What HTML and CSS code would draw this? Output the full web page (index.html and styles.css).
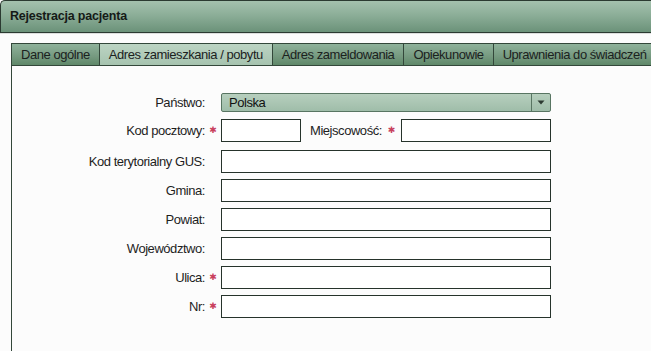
FILE: index.html
```html
<!DOCTYPE html>
<html lang="pl">
<head>
<meta charset="utf-8">
<title>Rejestracja pacjenta</title>
<link rel="stylesheet" href="styles.css">
</head>
<body>
<div class="window">
  <div class="titlebar">Rejestracja pacjenta</div>
  <div class="body">
    <div class="tabs">
      <div class="tab">Dane ogólne</div>
      <div class="tab active">Adres zamieszkania / pobytu</div>
      <div class="tab">Adres zameldowania</div>
      <div class="tab">Opiekunowie</div>
      <div class="tab">Uprawnienia do świadczeń</div>
    </div>
    <div class="panel">
      <div class="row row-select">
        <label class="lbl">Państwo:</label>
        <span class="star"></span>
        <div class="select">
          <span class="select-text">Polska</span>
          <span class="select-btn"><svg width="8" height="5" viewBox="0 0 8 5"><path d="M0.5 0.5 L7.5 0.5 L4 4.5 Z" fill="#2c3a31"/></svg></span>
        </div>
      </div>
      <div class="row row-postal">
        <label class="lbl">Kod pocztowy:</label>
        <span class="star">✱</span>
        <input class="field short" type="text">
        <label class="lbl-inline">Miejscowość:</label>
        <span class="star grow">✱</span>
        <input class="field mid" type="text">
      </div>
      <div class="row">
        <label class="lbl">Kod terytorialny GUS:</label>
        <span class="star"></span>
        <input class="field" type="text">
      </div>
      <div class="row">
        <label class="lbl">Gmina:</label>
        <span class="star"></span>
        <input class="field" type="text">
      </div>
      <div class="row">
        <label class="lbl">Powiat:</label>
        <span class="star"></span>
        <input class="field" type="text">
      </div>
      <div class="row">
        <label class="lbl">Województwo:</label>
        <span class="star"></span>
        <input class="field" type="text">
      </div>
      <div class="row">
        <label class="lbl">Ulica:</label>
        <span class="star">✱</span>
        <input class="field" type="text">
      </div>
      <div class="row">
        <label class="lbl">Nr:</label>
        <span class="star">✱</span>
        <input class="field" type="text">
      </div>
    </div>
  </div>
</div>
</body>
</html>
```
FILE: styles.css
```css
html, body {
  margin: 0;
  padding: 0;
  height: 100%;
}
body {
  background: #fbfbfb;
  font-family: "Liberation Sans", Arial, sans-serif;
  font-size: 13px;
  letter-spacing: -0.45px;
  color: #1e1e1e;
  overflow: hidden;
}
.window {
  display: flex;
  flex-direction: column;
  height: 100%;
}
.titlebar {
  height: 31px;
  line-height: 31px;
  padding-left: 9px;
  font-weight: bold;
  font-size: 12.5px;
  letter-spacing: -0.2px;
  color: #151a17;
  background: linear-gradient(#a4c1ae, #8cae98 45%, #6b9279);
  border-top: 1px solid #2b3a31;
  border-left: 1px solid #2b3a31;
  border-bottom: 1px solid #2b3a31;
  border-top-left-radius: 5px;
}
.body {
  flex: 1;
  display: flex;
  flex-direction: column;
  border-top: 1px solid #dcdfdd;
  padding: 9px 0 0 11px;
  background: #fcfcfc;
}
.tabs {
  display: flex;
  height: 23px;
}
.tab {
  box-sizing: border-box;
  height: 23px;
  line-height: 21px;
  padding: 0 9px;
  white-space: nowrap;
  color: #1b221e;
  background: linear-gradient(#8fb29b, #75997f 60%, #5f8869);
  border: 1px solid #33473a;
  border-left: none;
}
.tab:first-child {
  border-left: 1px solid #33473a;
}
.tab.active {
  background: linear-gradient(#bcd4c3, #a6c3af);
}
.panel {
  flex: 1;
  border-left: 1px solid #33473a;
  padding-top: 27px;
}
.row {
  display: flex;
  align-items: center;
  height: 23px;
  margin-bottom: 6px;
  width: 539px;
}
.row-select {
  height: 19px;
  margin-bottom: 7px;
}
.row-postal {
  margin-bottom: 8px;
}
.lbl {
  width: 193px;
  text-align: right;
  flex: none;
  white-space: nowrap;
}
.lbl-inline {
  margin-left: 9px;
  white-space: nowrap;
}
.star {
  width: 16px;
  flex: none;
  text-align: center;
  color: #c8405c;
  font-family: "DejaVu Sans", sans-serif;
  font-size: 9px;
  letter-spacing: 0;
  line-height: 23px;
}
.star.grow {
  flex: 1;
}
.field {
  box-sizing: border-box;
  width: 330px;
  height: 23px;
  margin: 0;
  border: 1px solid #26332b;
  background: #ffffff;
  padding: 0 3px;
  font: inherit;
  flex: none;
}
.field.short {
  width: 80px;
}
.field.mid {
  width: 150px;
}
.select {
  box-sizing: border-box;
  width: 330px;
  height: 19px;
  display: flex;
  border: 1px solid #587562;
  border-radius: 2px;
  background: linear-gradient(#b7cfbe, #9fbda9);
  flex: none;
}
.select-text {
  flex: 1;
  padding-left: 7px;
  line-height: 17px;
  color: #111;
}
.select-btn {
  width: 18px;
  border-left: 1px solid #587562;
  display: flex;
  align-items: center;
  justify-content: center;
}
```
